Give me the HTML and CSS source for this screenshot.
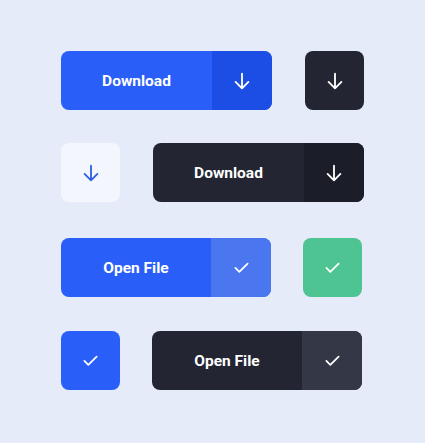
FILE: index.html
```html
<!DOCTYPE html>
<html lang="en">
<head>
  <meta charset="UTF-8" />
  <meta name="viewport" content="width=device-width, initial-scale=1.0"/>
  <title>Buttons</title>
  <link rel="stylesheet" href="styles.css">
</head>
<body>
  <div class="board">
    <div class="row">
      <button class="btn blue">
        <span class="label">Download</span>
        <span class="icon shade">
          <svg viewBox="0 0 24 24"><path d="M12 4v16M5 13l7 7 7-7"/></svg>
        </span>
      </button>
      <button class="square dark">
        <svg viewBox="0 0 24 24"><path d="M12 4v16M5 13l7 7 7-7"/></svg>
      </button>
    </div>

    <div class="row">
      <button class="square light">
        <svg viewBox="0 0 24 24"><path d="M12 4v16M5 13l7 7 7-7"/></svg>
      </button>
      <button class="btn dark">
        <span class="label">Download</span>
        <span class="icon shade">
          <svg viewBox="0 0 24 24"><path d="M12 4v16M5 13l7 7 7-7"/></svg>
        </span>
      </button>
    </div>

    <div class="row narrow third">
      <button class="btn blue">
        <span class="label">Open File</span>
        <span class="icon tint">
          <svg class="check" viewBox="0 0 24 24"><path d="M5 12.5l4.5 4.5L19 7.5"/></svg>
        </span>
      </button>
      <button class="square green">
        <svg class="check" viewBox="0 0 24 24"><path d="M5 12.5l4.5 4.5L19 7.5"/></svg>
      </button>
    </div>

    <div class="row narrow last">
      <button class="square blue">
        <svg class="check" viewBox="0 0 24 24"><path d="M5 12.5l4.5 4.5L19 7.5"/></svg>
      </button>
      <button class="btn dark">
        <span class="label">Open File</span>
        <span class="icon tint">
          <svg class="check" viewBox="0 0 24 24"><path d="M5 12.5l4.5 4.5L19 7.5"/></svg>
        </span>
      </button>
    </div>
  </div>
</body>
</html>
```

FILE: styles.css
```css
body {
  background: #e6ebf9;
  margin: 0;
  font-family: Roboto, "Liberation Sans", sans-serif;
}
.board {
  width: 303px;
  padding: 51px 0 0 61px;
  display: flex;
  flex-direction: column;
  gap: 33px;
}
.row {
  display: flex;
  justify-content: space-between;
  align-items: center;
}
.row.narrow {
  width: 301px;
}
.row.third {
  margin-top: 3px;
}
.row.last {
  margin-top: 1px;
}
button {
  border: none;
  padding: 0;
  font: inherit;
  cursor: pointer;
  color: #fff;
}
svg {
  width: 22px;
  height: 22px;
  fill: none;
  stroke: currentColor;
  stroke-width: 2;
  stroke-linecap: round;
  stroke-linejoin: round;
}
svg.check {
  width: 21px;
  height: 21px;
}
.btn {
  width: 211px;
  height: 59px;
  border-radius: 8px;
  overflow: hidden;
  display: flex;
}
.narrow .btn {
  width: 210px;
}
.btn .label {
  flex: 1;
  display: flex;
  justify-content: center;
  align-items: center;
  font-size: 15.5px;
  font-weight: 700;
}
.btn .icon {
  width: 60px;
  display: flex;
  justify-content: center;
  align-items: center;
}
.square {
  width: 59px;
  height: 59px;
  border-radius: 8px;
  display: flex;
  justify-content: center;
  align-items: center;
}
.blue { background: #2a5ef8; }
.blue .shade { background: #1c4ee6; }
.blue .tint { background: #4a77ef; }
.dark { background: #232533; }
.dark .shade { background: #1b1d28; }
.dark .tint { background: #343746; }
.light { background: #f3f6fd; color: #2d5fe6; }
.green { background: #4fc493; }
```
